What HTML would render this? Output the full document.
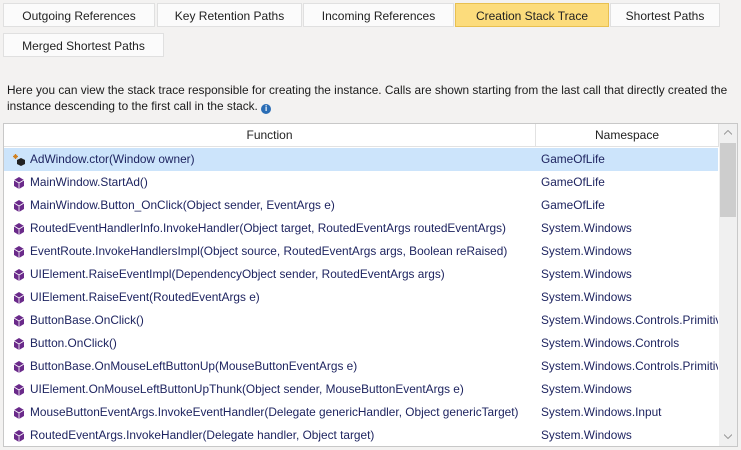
<!DOCTYPE html>
<html><head><style>
body{margin:0;width:741px;height:450px;background:#f3f2f1;font-family:"Liberation Sans",sans-serif;font-size:12px;color:#1b1b1b;position:relative;overflow:hidden}
.tab{position:absolute;height:24px;line-height:24px;text-align:center;background:#fbfbfb;border:1px solid #e0e0e0;box-sizing:border-box;color:#222}
.sel{background:#fcdc7c;border-color:#e8c050}
.desc{position:absolute;left:7px;top:82px;width:734px;line-height:16px;color:#1b1b1b;font-size:11.85px}
.grid{position:absolute;left:3px;top:123px;width:735px;height:324px;border:1px solid #c8c8c8;background:#fff;box-sizing:border-box;overflow:hidden}
.hdr{position:absolute;top:0;height:23px;line-height:23px;text-align:center;border-right:1px solid #e2e2e2;border-bottom:1px solid #e2e2e2;box-sizing:border-box;color:#222}
.row{position:absolute;left:0;width:714px;height:23px;line-height:23px;color:#1e2460;font-size:11.85px}
.row .f{position:absolute;left:26px;white-space:nowrap}
.row .n{position:absolute;left:537px;white-space:nowrap;width:177px;overflow:hidden}
.row svg{position:absolute;left:9px;top:6px}
.sb{position:absolute;left:715px;top:0;width:18px;height:322px;background:#f0f0f0}
.thumb{position:absolute;left:1px;top:19px;width:16px;height:74px;background:#cdcdcd}
</style></head><body>
<div class="tab" style="left:3px;top:3px;width:152px">Outgoing References</div>
<div class="tab" style="left:157px;top:3px;width:145px">Key Retention Paths</div>
<div class="tab" style="left:303px;top:3px;width:151px">Incoming References</div>
<div class="tab sel" style="left:455px;top:3px;width:154px">Creation Stack Trace</div>
<div class="tab" style="left:610px;top:3px;width:110px">Shortest Paths</div>
<div class="tab" style="left:3px;top:33px;width:161px">Merged Shortest Paths</div>
<div class="desc">Here you can view the stack trace responsible for creating the instance. Calls are shown starting from the last call that directly created the instance descending to the first call in the stack. <span style="display:inline-block;width:10px;height:10px;border-radius:50%;background:#2a6db5;color:#fff;font-size:8px;line-height:10px;text-align:center;font-weight:bold;vertical-align:-1px">i</span></div>
<div class="grid">
<div class="hdr" style="left:0;width:532px">Function</div>
<div class="hdr" style="left:532px;width:183px">Namespace</div>
<div class="row" style="top:24px;background:#cce4fb"><svg width="13" height="12" viewBox="0 0 13 12"><path d="M2.5 0v5M0 2.5h5M.8 .8l3.4 3.4M4.2 .8L.8 4.2" stroke="#d08020" stroke-width="1"/><path d="M4 6l4-2 4 2v4l-4 2-4-2z" fill="#222"/></svg><span class="f">AdWindow.ctor(Window owner)</span><span class="n">GameOfLife</span></div>
<div class="row" style="top:47px"><svg width="12" height="12" viewBox="0 0 12 12"><path d="M1 3l5-3 5 3v6l-5 3-5-3z" fill="#6a2a8a"/><path d="M1 3l5 3 5-3M6 6v6" stroke="#fff" stroke-width=".8" fill="none"/></svg><span class="f">MainWindow.StartAd()</span><span class="n">GameOfLife</span></div>
<div class="row" style="top:70px"><svg width="12" height="12" viewBox="0 0 12 12"><path d="M1 3l5-3 5 3v6l-5 3-5-3z" fill="#6a2a8a"/><path d="M1 3l5 3 5-3M6 6v6" stroke="#fff" stroke-width=".8" fill="none"/></svg><span class="f">MainWindow.Button_OnClick(Object sender, EventArgs e)</span><span class="n">GameOfLife</span></div>
<div class="row" style="top:93px"><svg width="12" height="12" viewBox="0 0 12 12"><path d="M1 3l5-3 5 3v6l-5 3-5-3z" fill="#6a2a8a"/><path d="M1 3l5 3 5-3M6 6v6" stroke="#fff" stroke-width=".8" fill="none"/></svg><span class="f">RoutedEventHandlerInfo.InvokeHandler(Object target, RoutedEventArgs routedEventArgs)</span><span class="n">System.Windows</span></div>
<div class="row" style="top:116px"><svg width="12" height="12" viewBox="0 0 12 12"><path d="M1 3l5-3 5 3v6l-5 3-5-3z" fill="#6a2a8a"/><path d="M1 3l5 3 5-3M6 6v6" stroke="#fff" stroke-width=".8" fill="none"/></svg><span class="f">EventRoute.InvokeHandlersImpl(Object source, RoutedEventArgs args, Boolean reRaised)</span><span class="n">System.Windows</span></div>
<div class="row" style="top:139px"><svg width="12" height="12" viewBox="0 0 12 12"><path d="M1 3l5-3 5 3v6l-5 3-5-3z" fill="#6a2a8a"/><path d="M1 3l5 3 5-3M6 6v6" stroke="#fff" stroke-width=".8" fill="none"/></svg><span class="f">UIElement.RaiseEventImpl(DependencyObject sender, RoutedEventArgs args)</span><span class="n">System.Windows</span></div>
<div class="row" style="top:162px"><svg width="12" height="12" viewBox="0 0 12 12"><path d="M1 3l5-3 5 3v6l-5 3-5-3z" fill="#6a2a8a"/><path d="M1 3l5 3 5-3M6 6v6" stroke="#fff" stroke-width=".8" fill="none"/></svg><span class="f">UIElement.RaiseEvent(RoutedEventArgs e)</span><span class="n">System.Windows</span></div>
<div class="row" style="top:185px"><svg width="12" height="12" viewBox="0 0 12 12"><path d="M1 3l5-3 5 3v6l-5 3-5-3z" fill="#6a2a8a"/><path d="M1 3l5 3 5-3M6 6v6" stroke="#fff" stroke-width=".8" fill="none"/></svg><span class="f">ButtonBase.OnClick()</span><span class="n">System.Windows.Controls.Primitives</span></div>
<div class="row" style="top:208px"><svg width="12" height="12" viewBox="0 0 12 12"><path d="M1 3l5-3 5 3v6l-5 3-5-3z" fill="#6a2a8a"/><path d="M1 3l5 3 5-3M6 6v6" stroke="#fff" stroke-width=".8" fill="none"/></svg><span class="f">Button.OnClick()</span><span class="n">System.Windows.Controls</span></div>
<div class="row" style="top:231px"><svg width="12" height="12" viewBox="0 0 12 12"><path d="M1 3l5-3 5 3v6l-5 3-5-3z" fill="#6a2a8a"/><path d="M1 3l5 3 5-3M6 6v6" stroke="#fff" stroke-width=".8" fill="none"/></svg><span class="f">ButtonBase.OnMouseLeftButtonUp(MouseButtonEventArgs e)</span><span class="n">System.Windows.Controls.Primitives</span></div>
<div class="row" style="top:254px"><svg width="12" height="12" viewBox="0 0 12 12"><path d="M1 3l5-3 5 3v6l-5 3-5-3z" fill="#6a2a8a"/><path d="M1 3l5 3 5-3M6 6v6" stroke="#fff" stroke-width=".8" fill="none"/></svg><span class="f">UIElement.OnMouseLeftButtonUpThunk(Object sender, MouseButtonEventArgs e)</span><span class="n">System.Windows</span></div>
<div class="row" style="top:277px"><svg width="12" height="12" viewBox="0 0 12 12"><path d="M1 3l5-3 5 3v6l-5 3-5-3z" fill="#6a2a8a"/><path d="M1 3l5 3 5-3M6 6v6" stroke="#fff" stroke-width=".8" fill="none"/></svg><span class="f">MouseButtonEventArgs.InvokeEventHandler(Delegate genericHandler, Object genericTarget)</span><span class="n">System.Windows.Input</span></div>
<div class="row" style="top:300px"><svg width="12" height="12" viewBox="0 0 12 12"><path d="M1 3l5-3 5 3v6l-5 3-5-3z" fill="#6a2a8a"/><path d="M1 3l5 3 5-3M6 6v6" stroke="#fff" stroke-width=".8" fill="none"/></svg><span class="f">RoutedEventArgs.InvokeHandler(Delegate handler, Object target)</span><span class="n">System.Windows</span></div>
<div class="sb"><svg style="position:absolute;left:5px;top:6px" width="8" height="5"><path d="M0 4.5l4-4 4 4" stroke="#999" fill="none"/></svg><div class="thumb"></div><svg style="position:absolute;left:5px;top:310px" width="8" height="5"><path d="M0 .5l4 4 4-4" stroke="#999" fill="none"/></svg></div>
</div>
</body></html>
